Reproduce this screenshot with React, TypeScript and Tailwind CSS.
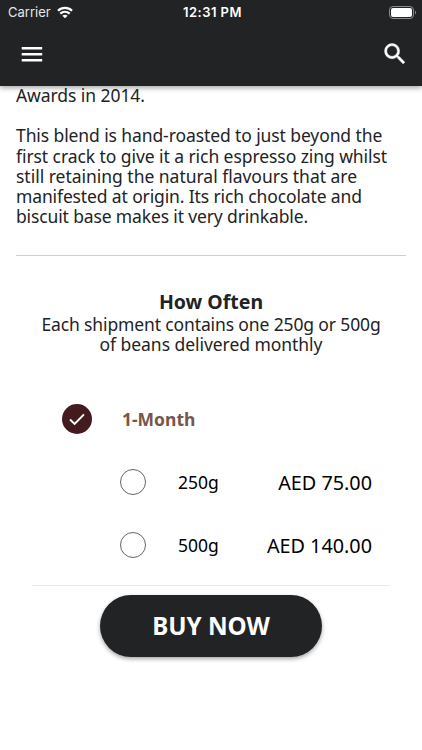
import clsx from "clsx";

const description = [
    { text: "This blend is hand-roasted to just beyond the", tracking: "tracking-[-0.1px]" },
    { text: "first crack to give it a rich espresso zing whilst", tracking: "tracking-[-0.07px]" },
    { text: "still retaining the natural flavours that are", tracking: "tracking-[-0.02px]" },
    { text: "manifested at origin. Its rich chocolate and", tracking: "tracking-[-0.13px]" },
    { text: "biscuit base makes it very drinkable.", tracking: "tracking-[-0.14px]" },
];

const sizes = [
    { label: "250g", price: "AED 75.00" },
    { label: "500g", price: "AED 140.00" },
];

function StatusBar() {
    return (
        <div className="grid h-6 grid-cols-3 items-center pr-[5px] pl-2 font-['Inter','Liberation_Sans',sans-serif] text-[13px] leading-6">
            <div className="flex items-center gap-[6px]">
                <span className="text-gray-200">Carrier</span>
                <svg width="16" height="13" viewBox="0 0 17 13" fill="none" stroke="white" strokeWidth="2.4">
                    <path d="M1 4.7C5.2.7 11.8.7 16 4.7" />
                    <path d="M3.5 7.7C6.4 5.1 10.6 5.1 13.5 7.7" />
                    <path d="M5.7 9.9C7.4 8.6 9.6 8.6 11.3 9.9L8.5 12.6Z" fill="white" stroke="none" />
                </svg>
            </div>
            <span className="text-center font-semibold whitespace-nowrap tracking-[0.45px]">12:31 PM</span>
            <svg className="justify-self-end" width="28" height="13" viewBox="0 0 28 13">
                <rect x="0.5" y="0.5" width="24" height="12" rx="3.5" fill="none" stroke="#8b8b8d" />
                <rect x="2" y="2" width="21" height="9" rx="2" fill="white" />
                <path d="M26 4.5c1.4.6 1.4 3.4 0 4z" fill="#8b8b8d" />
            </svg>
        </div>
    );
}

function Header() {
    return (
        <header className="relative z-10 h-[86px] bg-[#222325] text-white shadow-[0_2px_5px_rgba(0,0,0,0.35)]">
            <StatusBar />
            <div className="flex h-[60px] items-center justify-between pr-[13px] pl-5">
                <button aria-label="Menu">
                    <svg width="24" height="24" viewBox="0 0 24 24" fill="white">
                        <path d="M1.7 5.1h20.5v2.4H1.7zM1.7 11.1h20.5v2.4H1.7zM1.7 17.1h20.5v2.4H1.7z" />
                    </svg>
                </button>
                <button aria-label="Search">
                    <svg width="28" height="28" viewBox="0 0 24 24" fill="white" stroke="white" strokeWidth="0.35">
                        <path d="M15.5 14h-.79l-.28-.27A6.471 6.471 0 0 0 16 9.5 6.5 6.5 0 1 0 9.5 16c1.61 0 3.09-.59 4.23-1.57l.27.28v.79l5 4.99L20.49 19l-4.99-5zm-6 0C7.01 14 5 11.99 5 9.5S7.01 5 9.5 5 14 7.01 14 9.5 11.99 14 9.5 14z" />
                    </svg>
                </button>
            </div>
        </header>
    );
}

export default function App() {
    return (
        <div className="h-[750px] overflow-hidden bg-white font-['Noto_Sans','Open_Sans',sans-serif] text-[#222325]">
            <Header />
            <main className="-mt-px">
                <section className="mx-4 border-b border-[#cfcfcf] pb-7 text-[17.5px] leading-[20.25px] whitespace-nowrap">
                    <p className="tracking-[-0.07px]">Awards in 2014.</p>
                    <p className="mt-5">
                        {description.map((line) => (
                            <span key={line.text} className={clsx("block", line.tracking)}>
                                {line.text}
                            </span>
                        ))}
                    </p>
                </section>

                <section className="mx-8 border-b border-[#e9e9e9] pt-[34px]">
                    <div className="text-center whitespace-nowrap">
                        <h2 className="text-[19.5px] leading-6 font-bold">How Often</h2>
                        <p className="text-[17.5px] leading-5">
                            <span className="block tracking-[-0.13px]">Each shipment contains one 250g or 500g</span>
                            <span className="block tracking-[-0.05px]">of beans delivered monthly</span>
                        </p>
                    </div>

                    <div className="mt-[50px] ml-[30px] flex h-[30px] items-center">
                        <span className="flex size-[30px] items-center justify-center rounded-full bg-[#431a1e]">
                            <svg width="18" height="18" viewBox="0 0 18 18" fill="none" stroke="white" strokeWidth="2">
                                <path d="M2 9.5l4.6 4.4L16 4.4" />
                            </svg>
                        </span>
                        <span className="ml-[30px] pt-0.5 text-[17.5px] font-bold text-[#795548]">1-Month</span>
                    </div>

                    <div className="mt-[35px] mr-[18px] mb-[27px] ml-[88px] flex flex-col gap-[37px]">
                        {sizes.map((size) => (
                            <div key={size.label} className="flex h-[26px] items-center whitespace-nowrap text-black">
                                <span className="size-[26px] rounded-full border border-[#666]" />
                                <span className="ml-8 pt-0.5 text-[17.5px]">{size.label}</span>
                                <span className="ml-auto pt-0.5 text-[19.8px]">{size.price}</span>
                            </div>
                        ))}
                    </div>
                </section>

                <button className="mx-auto mt-[9px] flex h-[62px] w-[222px] items-center justify-center rounded-full bg-[#222325] pt-0.5 text-[24.2px] font-bold text-white shadow-[0_2px_4px_rgba(0,0,0,0.35)]">
                    BUY NOW
                </button>
            </main>
        </div>
    );
}
